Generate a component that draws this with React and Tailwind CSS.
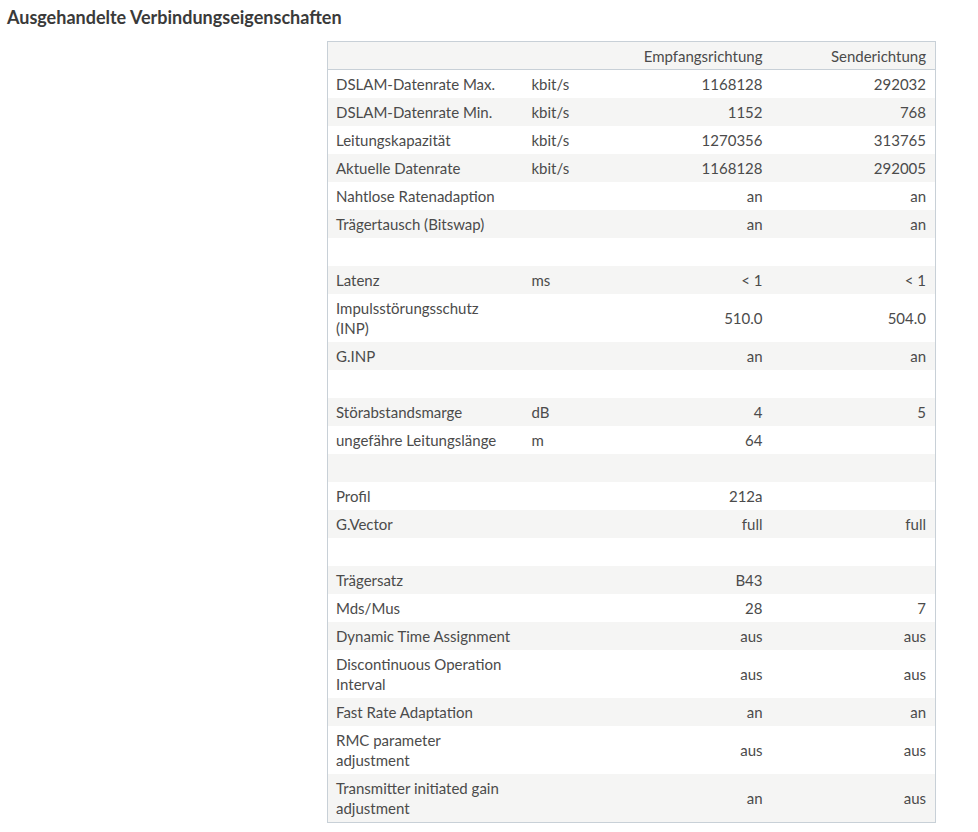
const rows = [
  ['DSLAM-Datenrate Max.', 'kbit/s', '1168128', '292032'],
  ['DSLAM-Datenrate Min.', 'kbit/s', '1152', '768'],
  ['Leitungskapazität', 'kbit/s', '1270356', '313765'],
  ['Aktuelle Datenrate', 'kbit/s', '1168128', '292005'],
  ['Nahtlose Ratenadaption', '', 'an', 'an'],
  ['Trägertausch (Bitswap)', '', 'an', 'an'],
  null,
  ['Latenz', 'ms', '< 1', '< 1'],
  [['Impulsstörungsschutz', '(INP)'], '', '510.0', '504.0'],
  ['G.INP', '', 'an', 'an'],
  null,
  ['Störabstandsmarge', 'dB', '4', '5'],
  ['ungefähre Leitungslänge', 'm', '64', ''],
  null,
  ['Profil', '', '212a', ''],
  ['G.Vector', '', 'full', 'full'],
  null,
  ['Trägersatz', '', 'B43', ''],
  ['Mds/Mus', '', '28', '7'],
  ['Dynamic Time Assignment', '', 'aus', 'aus'],
  [['Discontinuous Operation', 'Interval'], '', 'aus', 'aus'],
  ['Fast Rate Adaptation', '', 'an', 'an'],
  [['RMC parameter', 'adjustment'], '', 'aus', 'aus'],
  [['Transmitter initiated gain', 'adjustment'], '', 'an', 'aus'],
];

function Label({ text }) {
  if (Array.isArray(text)) {
    return (
      <>
        {text[0]}
        <br />
        {text[1]}
      </>
    );
  }
  return text;
}

export default function App() {
  return (
    <div className="min-h-screen bg-white text-[15px] text-[#4b4b4b]" style={{ fontFamily: 'Lato, "Noto Sans", sans-serif' }}>
      <h2 className="px-[7px] pt-[6px] text-[18px] font-bold leading-[22px] text-[#3a3a3a]">
        Ausgehandelte Verbindungseigenschaften
      </h2>
      <table className="ml-[327px] mt-[13px] w-[608px] table-fixed border-collapse border border-[#c8d0d7]">
        <colgroup>
          <col className="w-[195px]" />
          <col className="w-[80px]" />
          <col className="w-[169px]" />
          <col className="w-[164px]" />
        </colgroup>
        <thead>
          <tr className="border-b border-[#c8d0d7] bg-[#f5f5f4]">
            <th className="h-[28px]"></th>
            <th></th>
            <th className="px-[9px] text-right font-normal leading-5">Empfangsrichtung</th>
            <th className="px-[9px] text-right font-normal leading-5">Senderichtung</th>
          </tr>
        </thead>
        <tbody>
          {rows.map((r, i) => (
            <tr key={i} className={i % 2 === 1 ? 'bg-[#f5f5f4]' : 'bg-white'}>
              {r ? (
                <>
                  <td className="whitespace-nowrap px-[8px] py-1 align-middle leading-5">
                    <Label text={r[0]} />
                  </td>
                  <td className="px-[9px] py-1 leading-5">{r[1]}</td>
                  <td className="px-[9px] py-1 text-right leading-5">{r[2]}</td>
                  <td className="px-[9px] py-1 text-right leading-5">{r[3]}</td>
                </>
              ) : (
                <td colSpan={4} className="h-[28px]"></td>
              )}
            </tr>
          ))}
        </tbody>
      </table>
    </div>
  );
}
